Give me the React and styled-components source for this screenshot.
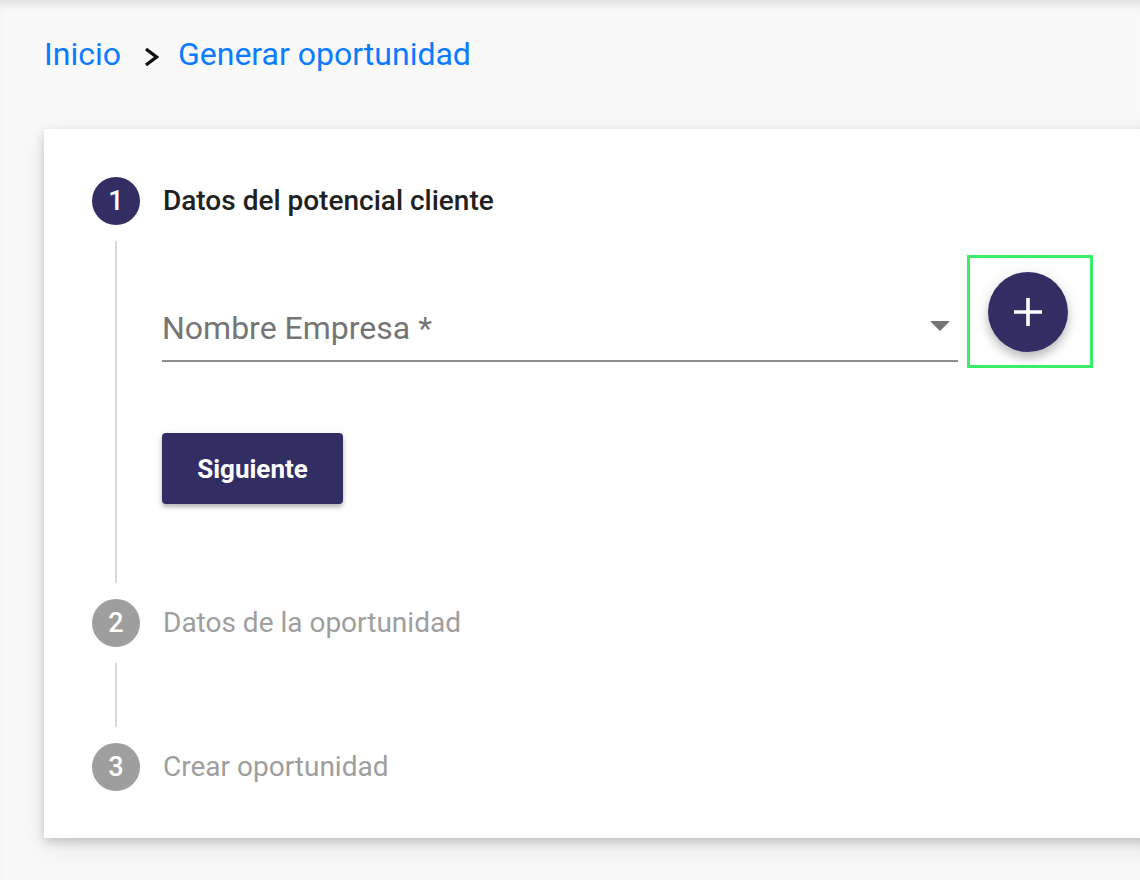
import styled, { createGlobalStyle } from 'styled-components';

const GlobalStyle = createGlobalStyle`
	html, body {
		margin: 0;
		padding: 0;
		background: #f9f9f9;
		overflow: hidden;
	}

	body {
		font-family: Roboto, "Liberation Sans", sans-serif;
	}
`;

const Page = styled.div`
	min-height: 880px;
	box-shadow: inset 0 10px 12px -8px rgba(0, 0, 0, 0.14);
	padding-top: 38px;
	box-sizing: border-box;
`;

const Breadcrumb = styled.nav`
	display: flex;
	align-items: center;
	padding-left: 44px;
	height: 32px;
`;

const Crumb = styled.a`
	font-size: 32px;
	line-height: 1;
	color: #0b7bff;
	text-decoration: none;
`;

const Separator = styled.svg`
	width: 15px;
	height: 20px;
	margin: 6px 19px 0 23px;
`;

const Card = styled.section`
	margin: 59px -40px 0 44px;
	background: #fff;
	padding: 48px 0 47px 48px;
	box-shadow: 0 4px 10px rgba(0, 0, 0, 0.18), 0 10px 30px rgba(0, 0, 0, 0.08);
`;

const StepHeader = styled.div`
	display: flex;
	align-items: center;
	height: 48px;
`;

const StepIcon = styled.div`
	width: 48px;
	height: 48px;
	border-radius: 50%;
	background: ${props => (props.active ? '#322e63' : '#9e9e9e')};
	color: #fff;
	display: flex;
	align-items: center;
	justify-content: center;
	font-size: 27px;
	font-weight: 500;
	flex-shrink: 0;
`;

const StepLabel = styled.span`
	margin: -2px 0 0 23px;
	font-size: 28px;
	font-weight: ${props => (props.active ? 500 : 400)};
	color: ${props => (props.active ? '#212121' : '#9e9e9e')};
`;

const Rail = styled.div`
	margin: 16px 0 16px 23px;
	border-left: 2px solid #d9d9d9;
	padding-left: 45px;
	min-height: ${props => props.minHeight || 0}px;
	box-sizing: border-box;
`;

const StepBody = styled.div`
	padding: 14px 0 79px;
`;

const FieldRow = styled.div`
	display: flex;
	align-items: flex-start;
	gap: 9px;
`;

const Field = styled.div`
	width: 796px;
	height: 107px;
	box-sizing: border-box;
	border-bottom: 2px solid #8e8e8e;
	display: flex;
	align-items: flex-end;
	padding-bottom: 16px;
`;

const FieldLabel = styled.span`
	flex: 1;
	font-size: 32px;
	line-height: 1;
	color: #757575;
`;

const Arrow = styled.span`
	width: 0;
	height: 0;
	border-left: 10px solid transparent;
	border-right: 10px solid transparent;
	border-top: 10px solid #757575;
	margin: 0 8px 13px 0;
`;

const Highlight = styled.div`
	width: 126px;
	height: 113px;
	box-sizing: border-box;
	border: 3px solid #3bee6a;
	padding: 14px 0 0 18px;
`;

const Fab = styled.button`
	width: 80px;
	height: 80px;
	border-radius: 50%;
	border: none;
	padding: 0;
	background: #322e63;
	display: flex;
	align-items: center;
	justify-content: center;
	box-shadow: 0 6px 10px rgba(0, 0, 0, 0.22), 0 2px 18px rgba(0, 0, 0, 0.08);
`;

const PrimaryButton = styled.button`
	margin-top: 65px;
	width: 181px;
	height: 71px;
	border: none;
	border-radius: 4px;
	background: #322e63;
	color: #fff;
	font-family: Roboto, "Liberation Sans", sans-serif;
	font-size: 26px;
	font-weight: 700;
	box-shadow: 0 3px 4px rgba(0, 0, 0, 0.25), 0 1px 8px rgba(0, 0, 0, 0.08);
`;

const steps = ['Datos del potencial cliente', 'Datos de la oportunidad', 'Crear oportunidad'];

const App = () => {
	return (
		<>
			<GlobalStyle />
			<Page>
				<Breadcrumb>
					<Crumb href="#">Inicio</Crumb>
					<Separator viewBox="0 0 15 20">
						<polyline points="2,2 12.5,10 2,18" fill="none" stroke="#111" strokeWidth="3.4" />
					</Separator>
					<Crumb href="#">Generar oportunidad</Crumb>
				</Breadcrumb>

				<Card>
					{steps.map((label, index) => {
						const active = index === 0;
						const last = index === steps.length - 1;
						return (
							<div key={label}>
								<StepHeader>
									<StepIcon active={active}>{index + 1}</StepIcon>
									<StepLabel active={active}>{label}</StepLabel>
								</StepHeader>
								{active && (
									<Rail>
										<StepBody>
											<FieldRow>
												<Field>
													<FieldLabel>Nombre Empresa *</FieldLabel>
													<Arrow />
												</Field>
												<Highlight>
													<Fab aria-label="Agregar">
														<svg width="30" height="30" viewBox="0 0 30 30">
															<path d="M15 1v28M1 15h28" stroke="#fff" strokeWidth="3.6" />
														</svg>
													</Fab>
												</Highlight>
											</FieldRow>
											<PrimaryButton>Siguiente</PrimaryButton>
										</StepBody>
									</Rail>
								)}
								{!active && !last && <Rail minHeight={64} />}
							</div>
						);
					})}
				</Card>
			</Page>
		</>
	);
};

export default App;
